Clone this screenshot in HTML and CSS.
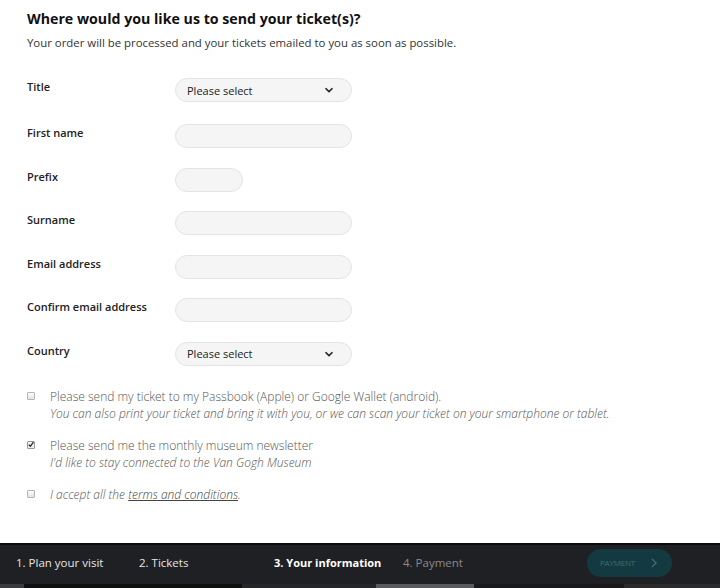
FILE: index.html
```html
<!DOCTYPE html>
<html lang="en">
<head>
<meta charset="utf-8">
<title>Your information</title>
<link rel="stylesheet" href="styles.css">
</head>
<body>
<div class="page">
  <main class="content">
    <h1 class="title">Where would you like us to send your ticket(s)?</h1>
    <p class="intro">Your order will be processed and your tickets emailed to you as soon as possible.</p>

    <div class="form">
      <div class="row first">
        <label class="label">Title</label>
        <div class="field select"><span>Please select</span>
          <svg class="chev" width="10" height="6" viewBox="0 0 10 6"><path d="M1.5 1.2 L5 4.6 L8.5 1.2" fill="none" stroke="#222" stroke-width="1.6"/></svg>
        </div>
      </div>
      <div class="row">
        <label class="label">First name</label>
        <div class="field"></div>
      </div>
      <div class="row">
        <label class="label">Prefix</label>
        <div class="field short"></div>
      </div>
      <div class="row">
        <label class="label">Surname</label>
        <div class="field"></div>
      </div>
      <div class="row">
        <label class="label">Email address</label>
        <div class="field"></div>
      </div>
      <div class="row">
        <label class="label">Confirm email address</label>
        <div class="field"></div>
      </div>
      <div class="row">
        <label class="label">Country</label>
        <div class="field select"><span>Please select</span>
          <svg class="chev" width="10" height="6" viewBox="0 0 10 6"><path d="M1.5 1.2 L5 4.6 L8.5 1.2" fill="none" stroke="#222" stroke-width="1.6"/></svg>
        </div>
      </div>
    </div>

    <div class="checks">
      <div class="check">
        <span class="box"></span>
        <div class="check-text">
          <div>Please send my ticket to my Passbook (Apple) or Google Wallet (android).</div>
          <div class="em">You can also print your ticket and bring it with you, or we can scan your ticket on your smartphone or tablet.</div>
        </div>
      </div>
      <div class="check">
        <span class="box checked"><svg width="7" height="7" viewBox="0 0 7 7"><path d="M0.8 3.6 L2.8 5.6 L6.3 0.8" fill="none" stroke="#222" stroke-width="1.5"/></svg></span>
        <div class="check-text">
          <div>Please send me the monthly museum newsletter</div>
          <div class="em">I'd like to stay connected to the Van Gogh Museum</div>
        </div>
      </div>
      <div class="check">
        <span class="box"></span>
        <div class="check-text">
          <div class="em">I accept all the <span class="link">terms and conditions</span>.</div>
        </div>
      </div>
    </div>
  </main>

  <footer class="footer">
    <nav class="steps">
      <span class="step s-1">1. Plan your visit</span>
      <span class="step s-2">2. Tickets</span>
      <span class="step s-3 current">3. Your information</span>
      <span class="step s-4 muted">4. Payment</span>
      <span class="pay">PAYMENT
        <svg width="6" height="10" viewBox="0 0 6 10"><path d="M1 1 L5 5 L1 9" fill="none" stroke="#3f6e74" stroke-width="1.4"/></svg>
      </span>
    </nav>
    <div class="strip">
      <span class="s1"></span><span class="s2"></span><span class="s3"></span><span class="s4"></span><span class="s5"></span><span class="s6"></span>
    </div>
  </footer>
</div>
</body>
</html>
```

FILE: styles.css
```css
* { box-sizing: border-box; }
html, body { margin: 0; padding: 0; background: #fff; }
body {
  font-family: "Open Sans", "Liberation Sans", sans-serif;
  color: #222;
}
.page {
  width: 720px;
  height: 588px;
  display: flex;
  flex-direction: column;
  overflow: hidden;
}
.content {
  padding: 9px 0 0 27px;
}
.title {
  margin: 0;
  font-size: 14.2px;
  line-height: 20px;
  font-weight: 700;
  color: #111;
}
.intro {
  margin: 6px 0 0;
  font-size: 11.4px;
  line-height: 15px;
  color: #333;
}
.form {
  margin-top: 28px;
  display: flex;
  flex-direction: column;
  gap: 19.5px;
}
.row {
  display: grid;
  grid-template-columns: 148px auto;
  align-items: start;
}
.row.first { margin-bottom: 2.5px; }
.label {
  font-size: 11px;
  font-weight: 600;
  line-height: 15px;
  color: #222;
  padding-top: 1px;
}
.field {
  width: 177px;
  height: 24px;
  border-radius: 12px;
  background: #f5f5f5;
  border: 1px solid #e4e4e4;
}
.field.short { width: 68px; }
.select {
  display: flex;
  align-items: center;
  justify-content: space-between;
  padding: 0 17px 0 11px;
  font-size: 11px;
  color: #222;
}
.chev { display: block; }

.checks {
  margin-top: 22px;
  display: flex;
  flex-direction: column;
  gap: 15px;
}
.check {
  display: flex;
  align-items: flex-start;
}
.box {
  width: 8px;
  height: 8px;
  margin-top: 4px;
  border: 1px solid #b5b5b5;
  border-radius: 1px;
  background: linear-gradient(#fdfdfd, #e3e3e3);
  flex: none;
  display: flex;
  align-items: center;
  justify-content: center;
}
.box.checked { background: #f2f2f2; border-color: #999; }
.check-text {
  margin-left: 15px;
  font-size: 12px;
  line-height: 17px;
  color: #555;
  font-weight: 300;
}
.em { font-style: italic; }
.link { text-decoration: underline; color: #444; }

.footer {
  margin-top: auto;
  border-top: 2px solid #0c0c0e;
  background: #1f2024;
}
.steps {
  height: 39px;
  display: flex;
  align-items: center;
  padding-left: 16px;
  padding-bottom: 4px;
  font-size: 11.5px;
  color: #e6e6e6;
}
.step { flex: none; }
.s-1 { width: 123px; }
.s-2 { width: 135px; }
.s-3 { width: 129px; font-size: 11px; }
.step.current { font-weight: 700; color: #fff; }
.step.muted { color: #8a8b8f; }
.pay {
  margin-left: auto;
  margin-right: 48px;
  width: 85px;
  height: 28px;
  border-radius: 14px;
  background: #123a40;
  color: #3f6e74;
  font-size: 8px;
  display: flex;
  align-items: center;
  padding-left: 13px;
  gap: 16px;
  letter-spacing: -0.2px;
}
.strip {
  height: 4px;
  display: flex;
}
.strip span { display: block; height: 100%; }
.s1 { width: 24px; background: #3a3b3f; }
.s2 { width: 218px; background: #0f0f10; }
.s3 { width: 134px; background: #262628; }
.s4 { width: 98px; background: #5a5a5c; }
.s5 { width: 150px; background: #19191b; }
.s6 { flex: 1; background: #2b2b2d; }
```
